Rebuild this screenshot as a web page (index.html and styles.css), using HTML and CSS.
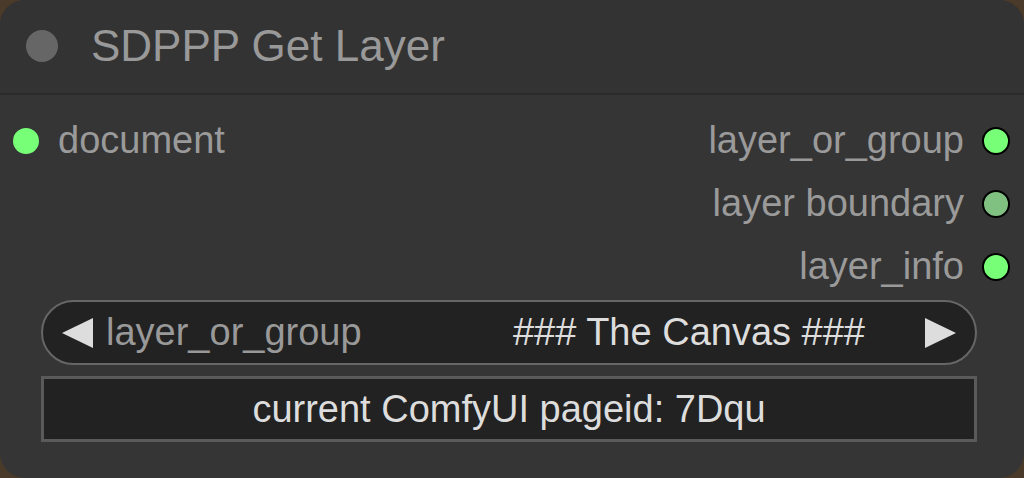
FILE: index.html
```html
<!DOCTYPE html>
<html>
<head>
<meta charset="utf-8">
<link rel="stylesheet" href="styles.css">
</head>
<body>
<div class="node">
  <div class="title">
    <span class="title-dot"></span>
    <span class="title-text">SDPPP Get Layer</span>
  </div>
  <div class="slots">
    <div class="inputs">
      <div class="slot slot-in">
        <span class="dot dot-in"></span>
        <span class="slot-label">document</span>
      </div>
    </div>
    <div class="outputs">
      <div class="slot slot-out">
        <span class="slot-label">layer_or_group</span>
        <span class="dot dot-out"></span>
      </div>
      <div class="slot slot-out">
        <span class="slot-label">layer boundary</span>
        <span class="dot dot-out dot-dim"></span>
      </div>
      <div class="slot slot-out">
        <span class="slot-label">layer_info</span>
        <span class="dot dot-out"></span>
      </div>
    </div>
  </div>
  <div class="widgets">
    <div class="combo">
      <svg class="arrow" width="31" height="30" viewBox="0 0 31 30"><polygon points="31,0 31,30 0,15" fill="#dddddd"/></svg>
      <span class="combo-label">layer_or_group</span>
      <span class="combo-value">### The Canvas ###</span>
      <svg class="arrow arrow-right" width="31" height="30" viewBox="0 0 31 30"><polygon points="0,0 0,30 31,15" fill="#dddddd"/></svg>
    </div>
    <div class="textbox">current ComfyUI pageid: 7Dqu</div>
  </div>
</div>
</body>
</html>
```

FILE: styles.css
```css
* { box-sizing: border-box; }
html, body {
  margin: 0;
  padding: 0;
  width: 1024px;
  height: 478px;
  overflow: hidden;
  background: #4a3a2a;
  font-family: "Liberation Sans", Arial, sans-serif;
}
.node {
  width: 1024px;
  height: 478px;
  background: #353535;
  border-radius: 25px;
  overflow: hidden;
  display: flex;
  flex-direction: column;
}
.title {
  height: 95px;
  background: #333333;
  border-bottom: 2px solid #2a2a2a;
  display: flex;
  align-items: center;
  padding-left: 26px;
  padding-bottom: 2px;
}
.title-dot {
  width: 32px;
  height: 32px;
  border-radius: 50%;
  background: #666666;
  flex: none;
}
.title-text {
  margin-left: 33px;
  font-size: 44px;
  color: #999999;
  line-height: 1;
}
.slots {
  display: flex;
  justify-content: space-between;
  padding-top: 14px;
}
.inputs, .outputs {
  display: flex;
  flex-direction: column;
}
.slot {
  height: 63px;
  display: flex;
  align-items: center;
  font-size: 38px;
  color: #9a9a9a;
}
.slot-in { padding-left: 13px; }
.slot-out { padding-right: 14px; justify-content: flex-end; }
.dot {
  border-radius: 50%;
  flex: none;
}
.dot-in {
  width: 26px;
  height: 26px;
  background: #77ff77;
  margin-right: 19px;
}
.dot-out {
  width: 28px;
  height: 28px;
  background: #77ff77;
  border: 2.5px solid #000000;
  margin-left: 18px;
}
.dot-dim { background: #80c080; }
.widgets {
  padding: 2px 47px 0 41px;
  display: flex;
  flex-direction: column;
  gap: 11px;
}
.combo {
  height: 65px;
  border: 2px solid #666666;
  border-radius: 33px;
  background: #222222;
  display: flex;
  align-items: center;
  padding: 0 19px 0 19px;
  font-size: 38px;
}
.arrow { flex: none; }
.combo-label {
  margin-left: 13px;
  color: #999999;
}
.combo-value {
  margin-left: auto;
  color: #dddddd;
}
.arrow-right { margin-left: 60px; }
.textbox {
  height: 66px;
  border: 3px solid #5a5a5a;
  background: #222222;
  display: flex;
  align-items: center;
  justify-content: center;
  font-size: 38px;
  color: #dddddd;
}
```
